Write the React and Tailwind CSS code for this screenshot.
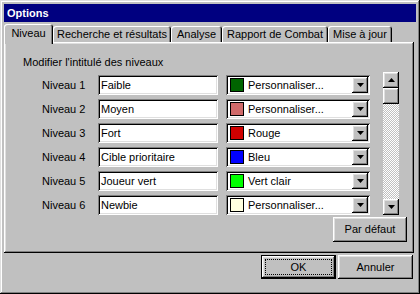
import React from 'react';

const raised = 'shadow-[inset_-1px_-1px_#000,inset_1px_1px_#fff,inset_-2px_-2px_#808080,inset_2px_2px_#dfdfdf]';
const sunken = 'shadow-[inset_1px_1px_#808080,inset_-1px_-1px_#fff,inset_2px_2px_#000,inset_-2px_-2px_#dfdfdf]';

const levels = [
    { label: 'Niveau 1', name: 'Faible', color: '#006400', colorName: 'Personnaliser...' },
    { label: 'Niveau 2', name: 'Moyen', color: '#d06a6a', colorName: 'Personnaliser...' },
    { label: 'Niveau 3', name: 'Fort', color: '#d00000', colorName: 'Rouge' },
    { label: 'Niveau 4', name: 'Cible prioritaire', color: '#0000ff', colorName: 'Bleu' },
    { label: 'Niveau 5', name: 'Joueur vert', color: '#00ff00', colorName: 'Vert clair' },
    { label: 'Niveau 6', name: 'Newbie', color: '#ffffe0', colorName: 'Personnaliser...' },
];

const tabs = [
    { label: 'Recherche et résultats', w: 'w-[118px]' },
    { label: 'Analyse', w: 'w-[51px]' },
    { label: 'Rapport de Combat', w: 'w-[106px]' },
    { label: 'Mise à jour', w: 'w-[64px]' },
];

function Arrow({ up }) {
    return (
        <svg width="7" height="4" viewBox="0 0 7 4">
            <polygon points={up ? '3.5,0 7,4 0,4' : '0,0 7,0 3.5,4'} fill="#000" />
        </svg>
    );
}

function ArrowButton({ up }) {
    return (
        <div className={`w-[16px] h-[16px] bg-[#c0c0c0] flex items-center justify-center ${raised}`}>
            <Arrow up={up} />
        </div>
    );
}

export default function App() {
    return (
        <div
            className="w-[420px] h-[294px] bg-[#c0c0c0] p-[4px] flex flex-col text-[11px] leading-[13px] text-black shadow-[inset_-1px_-1px_#000,inset_1px_1px_#dfdfdf,inset_-2px_-2px_#808080,inset_2px_2px_#fff]"
            style={{ fontFamily: '"Liberation Sans", Arial, sans-serif' }}
        >
            {/* Title bar */}
            <div className="h-[18px] bg-[#000080] text-white font-bold leading-[18px] pl-[3px]">Options</div>

            {/* Tabs */}
            <div className="h-[20px] flex items-end">
                <div className={`relative z-10 w-[49px] h-[20px] -mb-[2px] bg-[#c0c0c0] rounded-t-[3px] text-center pt-[3px] shadow-[inset_1px_1px_#fff,inset_-1px_0_#000,inset_-2px_0_#808080]`}>
                    Niveau
                </div>
                {tabs.map(tab => (
                    <div
                        key={tab.label}
                        className={`${tab.w} h-[16px] rounded-t-[3px] text-center pt-[2px] shadow-[inset_1px_1px_#fff,inset_-1px_0_#000,inset_-2px_0_#808080]`}
                    >
                        {tab.label}
                    </div>
                ))}
            </div>

            {/* Tab panel */}
            <div className={`w-[410px] h-[211px] flex flex-col pt-[14px] shadow-[inset_-1px_-1px_#000,inset_1px_1px_#fff,inset_-2px_-2px_#808080,inset_2px_2px_#dfdfdf]`}>
                <div className="pl-[19px]">Modifier l'intitulé des niveaux</div>

                <div className="flex items-end pl-[38px] mt-[3px]">
                    <div className="flex flex-col gap-[4px]">
                        {levels.map(level => (
                            <div key={level.label} className="flex items-center h-[20px]">
                                <span className="w-[56px]">{level.label}</span>
                                <div className={`w-[120px] h-[20px] bg-white pl-[3px] flex items-center ${sunken}`}>
                                    {level.name}
                                </div>
                                <div className={`ml-[8px] w-[144px] h-[20px] bg-white flex items-center p-[2px] ${sunken}`}>
                                    <span className="ml-[2px] w-[14px] h-[14px] border border-black" style={{ backgroundColor: level.color }}></span>
                                    <span className="ml-[4px] flex-1">{level.colorName}</span>
                                    <ArrowButton />
                                </div>
                            </div>
                        ))}
                    </div>

                    {/* Scrollbar */}
                    <div className="ml-[13px] w-[16px] h-[143px] flex flex-col">
                        <ArrowButton up />
                        <div className={`w-[16px] h-[16px] bg-[#c0c0c0] ${raised}`}></div>
                        <div className="flex-1 bg-[repeating-conic-gradient(#fff_0_25%,#c0c0c0_0_50%)] bg-[length:2px_2px]"></div>
                        <ArrowButton />
                    </div>
                </div>

                <div className="flex justify-end pr-[7px] mt-[2px]">
                    <button className={`w-[74px] h-[25px] bg-[#c0c0c0] ${raised}`}>Par défaut</button>
                </div>
            </div>

            {/* Bottom buttons */}
            <div className="flex justify-end gap-[2px] mt-[2px] pr-[3px]">
                <button className={`w-[75px] h-[24px] bg-[#c0c0c0] border border-black flex p-[3px] ${raised}`}>
                    <span className="flex-1 border border-dotted border-black flex items-center justify-center">OK</span>
                </button>
                <button className={`w-[75px] h-[24px] bg-[#c0c0c0] ${raised}`}>Annuler</button>
            </div>
        </div>
    );
}
